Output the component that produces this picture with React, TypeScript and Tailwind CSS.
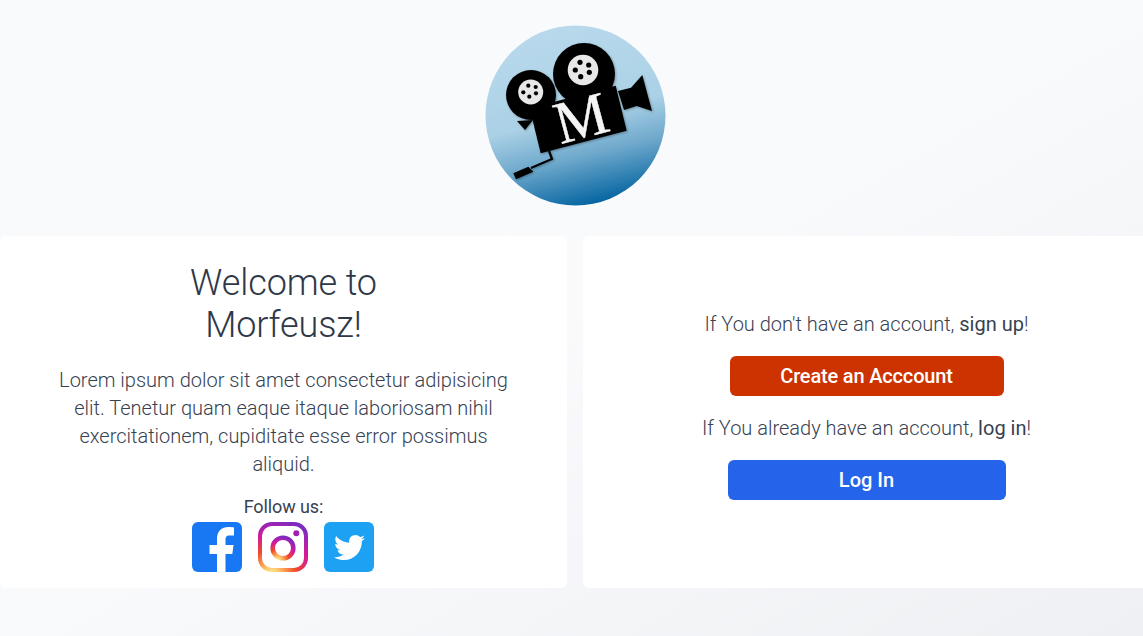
import { FaTwitter } from "react-icons/fa";

const Logo = () => (
  <svg viewBox="0 0 181 181" className="w-[181px] h-[181px]">
    <defs>
      <linearGradient id="sky" x1="0.38" y1="0" x2="0.62" y2="1">
        <stop offset="0" stopColor="#b9d9ec" />
        <stop offset="0.5" stopColor="#abd1e6" />
        <stop offset="0.72" stopColor="#6fa9cc" />
        <stop offset="1" stopColor="#00629f" />
      </linearGradient>
    </defs>
    <circle cx="90.5" cy="90.5" r="90" fill="url(#sky)" />
    <g fill="#000" className="drop-shadow-[1px_1px_1px_rgba(0,0,0,0.3)]">
      <circle cx="99" cy="49" r="31" />
      <circle cx="46" cy="70" r="25" />
      <polygon points="55.7,128.3 141.7,105.7 130.7,60.7 44.7,83.3" />
      <polygon points="32,96 48,95 40,105" />
      <polygon points="133,66 146,62.7 157.3,50 167,86 151.7,81 139,85" />
      <polygon points="28.3,148.3 43.3,141.7 48.3,146.7 31,154.3" />
      <path d="M46 143 L67 134 L64 126" fill="none" stroke="#000" strokeWidth="2.2" />
    </g>
    <circle cx="98" cy="45" r="15.3" fill="#e8e8e8" />
    <circle cx="45.7" cy="67" r="12.5" fill="#e8e8e8" />
    <g fill="#000">
      <circle cx="95" cy="37.3" r="2.6" />
      <circle cx="103.7" cy="40" r="2.6" />
      <circle cx="90.3" cy="45" r="2.6" />
      <circle cx="95.7" cy="51.7" r="2.6" />
      <circle cx="104.3" cy="47.3" r="2.6" />
      <circle cx="43.3" cy="60.7" r="2.1" />
      <circle cx="50.7" cy="62" r="2.1" />
      <circle cx="38.3" cy="67.3" r="2.1" />
      <circle cx="44.3" cy="71.7" r="2.1" />
      <circle cx="51" cy="68.3" r="2.1" />
    </g>
    <text
      x="96.7"
      y="113"
      textAnchor="middle"
      fontSize="60"
      fontFamily="'Liberation Serif', serif"
      fill="#f4f4f4"
      stroke="#f4f4f4"
      strokeWidth="0.4"
      transform="rotate(-15 96.7 95)"
    >
      M
    </text>
  </svg>
);

const FacebookIcon = () => (
  <div className="w-[50px] h-[50px] rounded-md bg-[#1877f2] overflow-hidden">
    <svg viewBox="0 0 50 50" className="w-full h-full">
      <path
        fill="#fff"
        d="M25 50V32h-7.5v-9H25v-6c0-8 4.5-12 11.500-12 2.500 0 4.500.2 5.500.5v8h-4.500c-3.500 0-4 2-4 4.500v5h8l-1.200 9h-6.800v18z"
      />
    </svg>
  </div>
);

const InstagramIcon = () => (
  <svg viewBox="0 0 50 50" className="w-[50px] h-[50px]">
    <defs>
      <radialGradient id="insta" cx="0.25" cy="1.1" r="1.2">
        <stop offset="0" stopColor="#fdf497" />
        <stop offset="0.15" stopColor="#fdc468" />
        <stop offset="0.45" stopColor="#f04a28" />
        <stop offset="0.72" stopColor="#d4189c" />
        <stop offset="1" stopColor="#7c2bc0" />
      </radialGradient>
    </defs>
    <rect x="2" y="2" width="46" height="46" rx="12" fill="none" stroke="url(#insta)" strokeWidth="4" />
    <circle cx="25" cy="26" r="10.3" fill="none" stroke="url(#insta)" strokeWidth="4.600" />
    <circle cx="38.300" cy="11.300" r="3" fill="#a31eb0" />
  </svg>
);

const TwitterIcon = () => (
  <div className="w-[50px] h-[50px] rounded-md bg-[#1da1f2] flex items-center justify-center text-white">
    <FaTwitter size={31} className="translate-x-px" />
  </div>
);

export default function App() {
  return (
    <div className="h-[636px] overflow-hidden bg-linear-to-br from-[#f9fafc] via-[#f9fafc] to-[#eff0f3] font-['Roboto',sans-serif] text-[#374151]">
      <div className="w-[1150px]">
        <div className="h-[236px] flex justify-center pt-[25px]">
          <Logo />
        </div>
        <div className="flex gap-4">
          <div className="w-[567px] h-[352px] shrink-0 bg-white rounded-md flex flex-col items-center pt-[26px] text-center">
            <h1 className="text-4xl leading-[42px] font-light w-[300px] text-[#2f3848] tracking-[-0.1px]">
              Welcome to Morfeusz!
            </h1>
            <p className="mt-5 w-[460px] text-xl leading-7 font-light">
              Lorem ipsum dolor sit amet consectetur adipisicing elit. Tenetur quam eaque itaque laboriosam nihil
              exercitationem, cupiditate esse error possimus aliquid.
            </p>
            <p className="mt-[15px] text-lg leading-7 tracking-[-0.1px]">Follow us:</p>
            <div className="flex gap-4 mt-px -translate-x-px">
              <FacebookIcon />
              <InstagramIcon />
              <TwitterIcon />
            </div>
          </div>
          <div className="w-[567px] h-[352px] shrink-0 bg-white rounded-md flex flex-col items-center justify-center pb-[14px] text-center">
            <p className="text-xl leading-7 font-light">
              If You don't have an account, <span className="font-normal">sign up</span>!
            </p>
            <button className="mt-[18px] w-[274px] h-10 rounded-md bg-[#cc3300] text-white text-xl font-medium tracking-[-0.17px]">
              Create an Acccount
            </button>
            <p className="mt-[18px] text-xl leading-7 font-light">
              If You already have an account, <span className="font-normal">log in</span>!
            </p>
            <button className="mt-[18px] w-[278px] h-10 rounded-md bg-[#2563eb] text-white text-xl font-medium">
              Log In
            </button>
          </div>
        </div>
      </div>
    </div>
  );
}
